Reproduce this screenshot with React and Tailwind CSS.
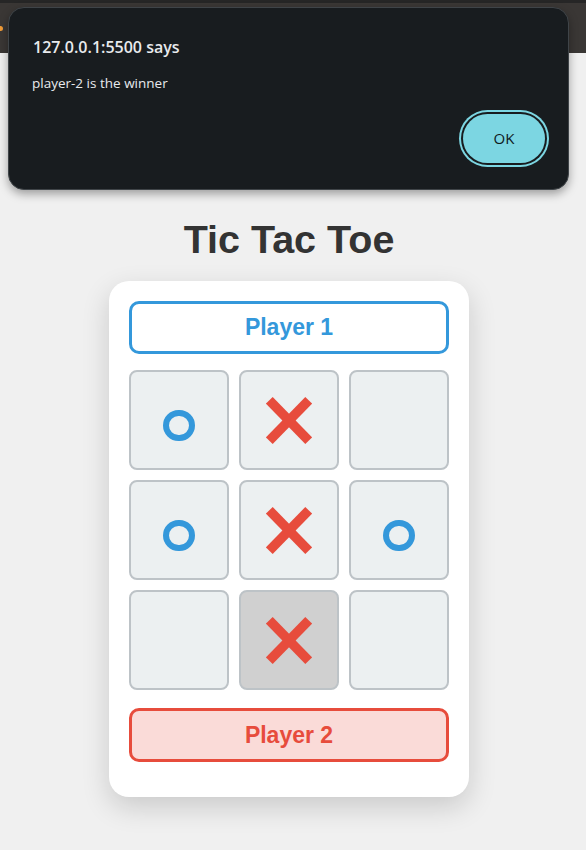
import { useState } from 'react';

const board = ['O', 'X', '', 'O', 'X', 'O', '', 'X', ''];

const Cross = () => (
  <svg width="46" height="47" viewBox="0 0 46 47">
    <line x1="3.3" y1="3.3" x2="42.7" y2="43.7" stroke="#e74c3c" strokeWidth="9.5" />
    <line x1="42.7" y1="3.3" x2="3.3" y2="43.7" stroke="#e74c3c" strokeWidth="9.5" />
  </svg>
);

const Ring = () => (
  <div className="w-[32px] h-[31px] mt-[10px] rounded-full border-[6px] border-[#3498db]" />
);

const Cell = ({ value, hover }) => (
  <div
    className={`w-[100px] h-[100px] rounded-[8px] border-2 border-[#bdc3c7] flex items-center justify-center ${
      hover ? 'bg-[#d0d0d0]' : 'bg-[#ecf0f1]'
    }`}
  >
    {value === 'X' && <Cross />}
    {value === 'O' && <Ring />}
  </div>
);

const App = () => {
  const [cells] = useState(board);

  return (
    <div className="relative min-h-[850px] bg-[#f0f0f0] font-['Liberation_Sans',Arial,sans-serif]">
      {/* browser chrome strip */}
      <div className="h-[3px] bg-[#262626]" />
      <div className="h-[50px] bg-[#3a3735] flex items-center">
        <span className="ml-[-2px] w-[5px] h-[5px] rounded-full bg-[#f29d38]" />
      </div>

      {/* Game */}
      <div className="flex flex-col items-center pr-[8px]">
        <h1 className="mt-[167px] text-[39.5px] leading-[38px] font-bold text-[#333333]">Tic Tac Toe</h1>

        <div className="mt-[23px] w-[360px] bg-white rounded-[20px] px-[20px] pt-[20px] pb-[35px] shadow-[0_10px_28px_rgba(0,0,0,0.16)]">
          <div className="h-[53px] rounded-[10px] border-[3px] border-[#3498db] bg-white flex items-center justify-center text-[23px] font-bold text-[#3498db]">
            Player 1
          </div>

          <div className="mt-[16px] grid grid-cols-[repeat(3,100px)] gap-[10px]">
            {cells.map((v, i) => (
              <Cell key={i} value={v} hover={i === 7} />
            ))}
          </div>

          <div className="mt-[18px] h-[54px] rounded-[10px] border-[3px] border-[#e74c3c] bg-[#fadbd8] flex items-center justify-center text-[23px] font-bold text-[#e74c3c]">
            Player 2
          </div>
        </div>
      </div>

      {/* Alert dialog */}
      <div className="absolute left-[8px] top-[7px] w-[561px] h-[183px] rounded-[16px] bg-[#181c1f] border border-[#3f4448] shadow-[0_4px_10px_rgba(0,0,0,0.35)] font-['Open_Sans','Noto_Sans',sans-serif]">
        <div className="pl-[24px] pt-[28px] text-[16px] leading-[22px] font-semibold text-[#e8eaed]">
          127.0.0.1:5500 says
        </div>
        <div className="pl-[23px] mt-[15px] text-[13.5px] leading-[20px] text-[#e8eaed]">
          player-2 is the winner
        </div>
        <div className="flex justify-end pr-[23px] mt-[21px]">
          <button className="w-[82px] h-[49px] rounded-full bg-[#7cd6e2] text-[#0f1b1e] text-[15px] shadow-[0_0_0_2px_#181c1f,0_0_0_4px_#7cd6e2]">
            OK
          </button>
        </div>
      </div>
    </div>
  );
};

export default App;
